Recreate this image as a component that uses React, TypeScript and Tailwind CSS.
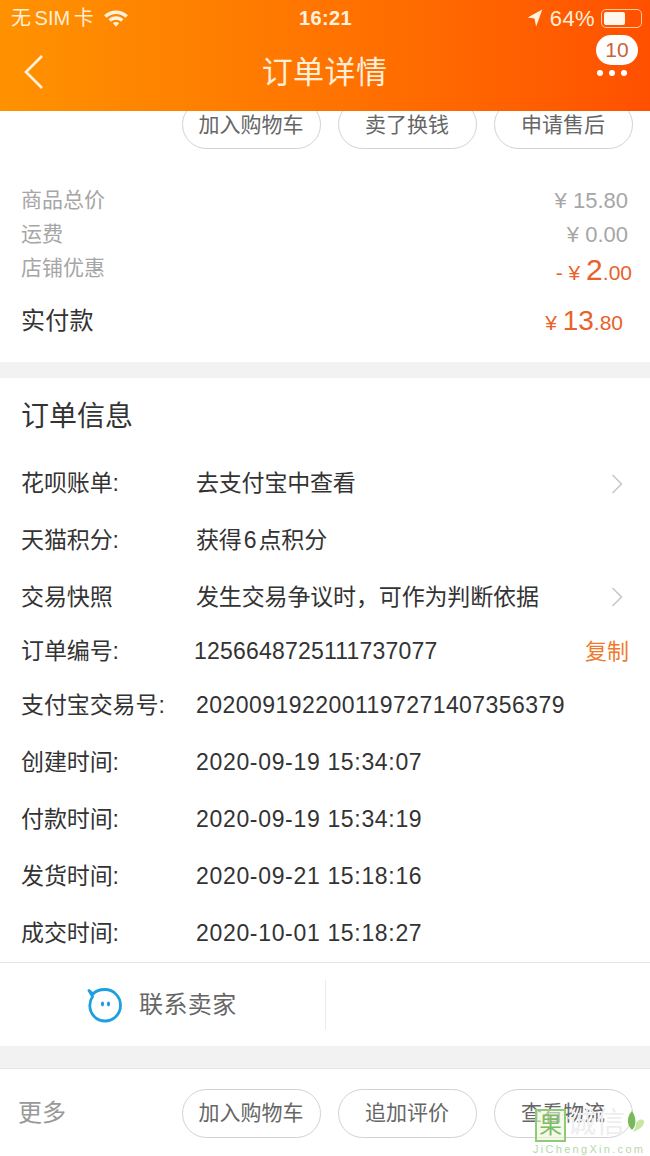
import React from "react";

function Pill({ children }: { children: React.ReactNode }) {
  return (
    <div className="w-[139px] h-[49px] rounded-full border border-[#d2d2d2] bg-white flex items-center justify-center text-[21px] text-[#666666] shrink-0">
      <span className="-ml-[1px]">{children}</span>
    </div>
  );
}

function Chevron() {
  return (
    <svg width="14" height="22" viewBox="0 0 14 22" fill="none" className="shrink-0 -ml-[4px] mr-[4px]">
      <path d="M2.5 2 L11.5 11 L2.5 20" stroke="#c8c8c8" strokeWidth="1.6" />
    </svg>
  );
}

function Row({ label, value, h, right, valueClass }: { label: string; value: string; h: string; right?: React.ReactNode; valueClass?: string }) {
  return (
    <div className={`flex items-center pl-[21px] pr-[22px] ${h}`}>
      <div className="w-[175px] shrink-0 text-[#333333] text-[23px] tracking-[-0.1px] whitespace-nowrap">{label}</div>
      <div className={`flex-1 text-[#333333] text-[23px] whitespace-nowrap ${valueClass ?? ""}`}>{value}</div>
      {right}
    </div>
  );
}

export default function App() {
  return (
    <div className="relative w-[650px] h-[1156px] overflow-hidden bg-white font-['Liberation_Sans','Noto_Sans_CJK_SC',sans-serif]">
      <header className="relative z-10 h-[111px] bg-gradient-to-r from-[#ff9200] to-[#ff5000] text-white">
        <div className="flex items-center justify-between h-[36px] pl-[11px] pr-[8px]">
          <div className="flex items-center gap-[9px] flex-1">
            <span className="text-[20px] text-[#ffeed8] [word-spacing:-2px]">无 SIM 卡</span>
            <svg width="26" height="20" viewBox="0 0 24 18" fill="#fff3e0">
              <path d="M12 2 C7.8 2 4 3.6 1 6.4 L3.2 8.8 C5.6 6.6 8.7 5.2 12 5.2 C15.3 5.2 18.4 6.6 20.8 8.8 L23 6.4 C20 3.6 16.2 2 12 2 Z" />
              <path d="M12 7.4 C9.4 7.4 7 8.4 5.1 10.2 L7.3 12.5 C8.6 11.3 10.2 10.6 12 10.6 C13.8 10.6 15.4 11.3 16.7 12.5 L18.9 10.2 C17 8.4 14.6 7.4 12 7.4 Z" />
              <path d="M12 12.8 C10.9 12.8 9.9 13.2 9.1 13.9 L12 17 L14.9 13.9 C14.1 13.2 13.1 12.8 12 12.8 Z" />
            </svg>
          </div>
          <span className="text-[20px] font-bold tracking-[0.4px] text-[#fff3e0] -ml-[2px]">16:21</span>
          <div className="flex items-center justify-end gap-[7px] flex-1">
            <svg width="16" height="18" viewBox="0 0 14 16" fill="#fff3e0">
              <path d="M13.5 0.5 L0.5 7.5 L6.5 8.5 L8 15.5 Z" />
            </svg>
            <span className="text-[22px] tracking-[0.4px] text-[#ffeed8]">64%</span>
            <div className="relative w-[41px] h-[19px] rounded-[5px] border border-[#ffc79a] p-[2px] -ml-[1px]">
              <div className="h-full w-[21px] rounded-[2px] bg-[#fff6ec]" />
            </div>
          </div>
        </div>
        <div className="relative flex items-center justify-center h-[75px]">
          <svg width="22" height="36" viewBox="0 0 22 36" fill="none" className="absolute left-[23px] top-[18px]">
            <path d="M19 2 L3 18 L19 34" stroke="#fff3e0" strokeWidth="2.6" />
          </svg>
          <span className="text-[31px] tracking-[0.4px] text-[#ffeed8] mt-[-1px] -ml-[1px]">订单详情</span>
          <div className="absolute left-[596px] top-[-1px] w-[42px] h-[30px] rounded-full bg-white flex items-center justify-center text-[#c9633b] text-[21px]">10</div>
          <div className="absolute left-[597px] top-[34px] flex gap-[6px]">
            <i className="block w-[6px] h-[6px] rounded-full bg-white" />
            <i className="block w-[6px] h-[6px] rounded-full bg-white" />
            <i className="block w-[6px] h-[6px] rounded-full bg-white" />
          </div>
        </div>
      </header>

      <section className="flow-root h-[251px]">
        <div className="flex justify-end gap-[17px] pr-[17px] -mt-[11px]">
          <Pill>加入购物车</Pill>
          <Pill>卖了换钱</Pill>
          <Pill>申请售后</Pill>
        </div>
        <div className="pl-[21px] pr-[22px] pt-[34px]">
          <div className="flex items-center justify-between h-[34px] text-[21px] text-[#a6a6a6]">
            <span>商品总价</span>
            <span className="text-[22px]">¥ 15.80</span>
          </div>
          <div className="flex items-center justify-between h-[34px] text-[21px] text-[#a6a6a6]">
            <span>运费</span>
            <span className="text-[22px]">¥ 0.00</span>
          </div>
          <div className="flex items-start justify-between h-[34px] text-[21px] text-[#a6a6a6]">
            <span className="leading-[34px]">店铺优惠</span>
            <span className="text-[#e8622a] text-[21px] leading-[38px] -mr-[4px]">
              - ¥ <span className="text-[30px]">2</span>.00
            </span>
          </div>
          <div className="flex items-center justify-between h-[74px] text-[#333333]">
            <span className="text-[24px] tracking-[0.2px] -mt-[2px]">实付款</span>
            <span className="text-[#e8622a] text-[21px] mr-[5px] -mt-[2px]">
              ¥ <span className="text-[28px]">13</span>.80
            </span>
          </div>
        </div>
      </section>

      <div className="h-[16px] bg-[#f2f2f2]" />

      <section>
        <div className="h-[77px] pl-[21px] flex items-center text-[28px] text-[#333333]">订单信息</div>
        <Row label="花呗账单:" value="去支付宝中查看" h="h-[57px]" right={<Chevron />} valueClass="tracking-[-0.2px]" />
        <Row label="天猫积分:" value="获得 6 点积分" h="h-[57px]" valueClass="tracking-[-0.2px] [word-spacing:-4px]" />
        <Row label="交易快照" value="发生交易争议时，可作为判断依据" h="h-[56px]" right={<Chevron />} valueClass="tracking-[-0.15px]" />
        <Row
          label="订单编号:"
          value="1256648725111737077"
          h="h-[53px]"
          valueClass="-ml-[2px] tracking-[0.2px]"
          right={<span className="text-[#ef7a2c] text-[22px] -mr-[1px]">复制</span>}
        />
        <Row label="支付宝交易号:" value="2020091922001197271407356379" h="h-[54px]" valueClass="tracking-[0.45px]" />
        <Row label="创建时间:" value="2020-09-19 15:34:07" h="h-[57px] mt-[2px]" valueClass="tracking-[0.67px]" />
        <Row label="付款时间:" value="2020-09-19 15:34:19" h="h-[57px]" valueClass="tracking-[0.67px]" />
        <Row label="发货时间:" value="2020-09-21 15:18:16" h="h-[57px]" valueClass="tracking-[0.67px]" />
        <Row label="成交时间:" value="2020-10-01 15:18:27" h="h-[57px]" valueClass="tracking-[0.67px]" />
      </section>

      <div className="h-[84px] border-t border-[#e4e4e4] flex items-center">
        <div className="w-[326px] h-[50px] border-r border-[#ececec] flex items-center pl-[87px] gap-[16px]">
          <svg width="36" height="36" viewBox="0 0 36 36" fill="none">
            <path d="M6 7 C9 3.5 13.5 2.5 18 2.5 C26.5 2.5 33.5 9.5 33.5 18.5 C33.5 27 26.5 34 18 34 C9.5 34 2.8 27 2.8 18.5 C2.8 14.8 3.8 12 5.6 9.5 L2 3.5 Z" stroke="#1e9fe0" strokeWidth="2.8" strokeLinejoin="round" />
            <ellipse cx="15.5" cy="17" rx="1.6" ry="2.4" fill="#1e9fe0" />
            <ellipse cx="21.5" cy="17" rx="1.6" ry="2.4" fill="#1e9fe0" />
          </svg>
          <span className="text-[24px] tracking-[0.4px] text-[#666666]">联系卖家</span>
        </div>
      </div>

      <div className="h-[23px] bg-[#f2f2f2] border-b border-[#e6e6e6]" />

      <div className="flex items-center h-[88px] pl-[18px] pr-[17px]">
        <span className="text-[24px] text-[#999999] flex-1">更多</span>
        <div className="flex gap-[17px]">
          <Pill>加入购物车</Pill>
          <Pill>追加评价</Pill>
          <Pill>查看物流</Pill>
        </div>
      </div>

      <div className="absolute left-[534px] top-[1108px] w-[116px] h-[48px] pointer-events-none">
        <div className="absolute left-[1px] top-[1px] w-[31px] h-[33px] border-2 border-[#8fc97a] bg-[#eef7d8]/60 flex items-center justify-center text-[23px] leading-none text-[#7dbb66]">果</div>
        <div className="absolute left-[33px] top-[1px] text-[29px] leading-none text-[#eeeeee] whitespace-nowrap">诚信</div>
        <svg width="20" height="26" viewBox="0 0 20 26" className="absolute left-[92px] top-[2px]">
          <path d="M6 1 C1 6 0 14 6 20 C10 17 11 8 6 1 Z" fill="#7ab85c" />
          <path d="M7 22 C12 20 19 16 18 11 C16 8 12 10 10 13 C10 16 9 19 7 22 Z" fill="#c7e6a0" />
        </svg>
        <div className="absolute left-[-1px] top-[35px] text-[11px] leading-[13px] tracking-[2.3px] text-[#b5d9a5] whitespace-nowrap">JiChengXin.com</div>
      </div>
    </div>
  );
}
